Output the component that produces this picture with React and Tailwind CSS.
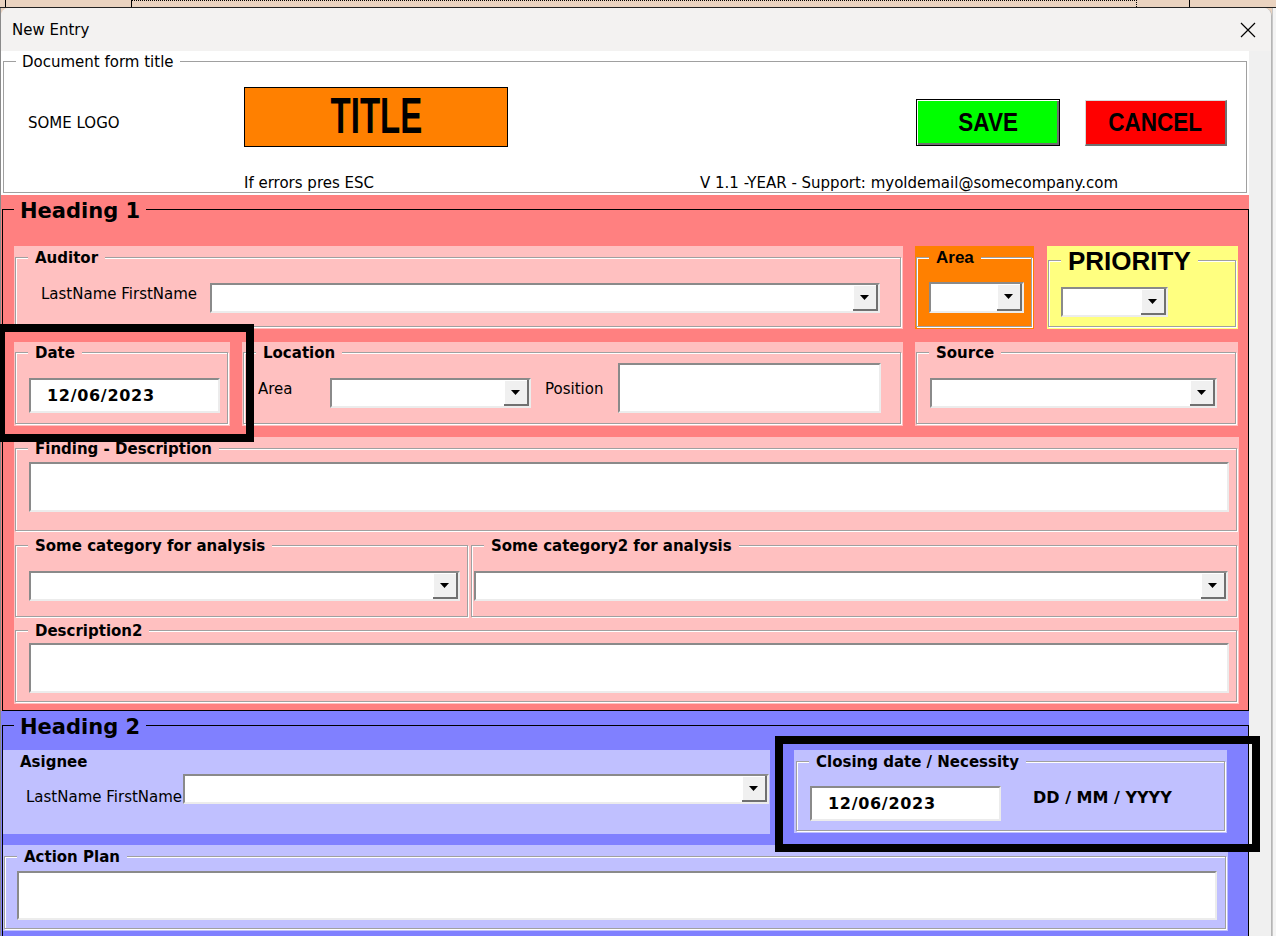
import React from "react";

const sunken =
  "bg-white border-2 border-t-[#8a8a8a] border-l-[#8a8a8a] border-r-[#ececec] border-b-[#ececec]";
const etched = "border border-[#a0a0a0] shadow-[inset_1px_1px_0_#fff,1px_1px_0_#fff]";
const arial = "font-['Liberation_Sans',Arial,sans-serif]";

function Combo({ className = "" }) {
  return (
    <div className={`flex ${sunken} ${className}`}>
      <div className="flex-1" />
      <div className="w-[25px] flex items-center justify-center bg-[#f0f0f0] border-r-2 border-b-2 border-r-[#707070] border-b-[#707070] shadow-[inset_1px_1px_0_#fff]">
        <svg width="9" height="5" viewBox="0 0 9 5">
          <path d="M0 0H9L4.5 5Z" fill="#000" />
        </svg>
      </div>
    </div>
  );
}

function DateBox({ className = "" }) {
  return (
    <div className={`flex items-center pl-[16px] ${sunken} ${className}`}>
      <span className="text-[16px] font-bold tracking-[0.7px] leading-none">12/06/2023</span>
    </div>
  );
}

function Panel({
  bg,
  legend,
  className = "",
  pad = "pt-[11px] pl-px pr-[2px] pb-[2px]",
  legendClass = "text-[15px] font-bold leading-[18px]",
  children,
}) {
  return (
    <div className={`flex flex-col ${pad} ${bg} ${className}`}>
      <div className={`relative flex-1 ${etched}`}>
        {legend && (
          <span
            className={`absolute left-[12px] top-0 -translate-y-1/2 px-[7px] whitespace-nowrap ${bg} ${legendClass}`}
          >
            {legend}
          </span>
        )}
        {children}
      </div>
    </div>
  );
}

export default function App() {
  return (
    <div className="relative w-[1276px] h-[936px] overflow-hidden bg-[#ead3c0] text-black font-['DejaVu_Sans',sans-serif]">
      {/* sheet behind the dialog */}
      <div className="h-[8px] flex border-b border-[#222]">
        <div className="w-[6px] border-r border-black" />
        <div className="w-[126px] border-r border-black" />
        <div className="w-[1005px] border-r border-black border-t border-dotted" />
        <div className="w-[53px] border-r border-black" />
      </div>

      <div className="flex h-[928px]">
        <div className="w-px bg-[#8a8a8a]" />

        {/* dialog */}
        <div className="w-[1271px] flex flex-col rounded-t-[8px] overflow-hidden bg-[#f0f0f0] border-r border-[#b5b5b5]">
          <div className="h-[43px] shrink-0 bg-[#f3f2f1] flex items-center justify-between pl-[11px] pr-[15px]">
            <span className="text-[15px] leading-[18px]">New Entry</span>
            <svg width="16" height="16" viewBox="0 0 16 16">
              <path d="M1 1L15 15M15 1L1 15" stroke="#000" strokeWidth="1.2" />
            </svg>
          </div>

          <div className="flex flex-1 min-h-0">
            <div className="w-[1248px] flex flex-col">
              {/* Document header */}
              <div className="bg-white pt-[10px] px-[2px] pb-[2px]">
                <div className={`relative h-[132px] ${etched}`}>
                  <span className="absolute left-[12px] top-0 -translate-y-1/2 px-[6px] bg-white text-[15px] leading-[18px]">
                    Document form title
                  </span>
                  <div className="flex items-start pt-[25px]">
                    <div className="w-[240px] pl-[24px] pt-[27px] text-[15px] leading-[18px]">SOME LOGO</div>
                    <div className="w-[264px] h-[60px] bg-[#ff8000] border border-black flex items-center justify-center">
                      <span className={`inline-block scale-x-[0.66] mt-[-3px] font-bold text-[50px] leading-none ${arial}`}>
                        TITLE
                      </span>
                    </div>
                    <div
                      className={`ml-[408px] mt-[12px] w-[144px] h-[47px] bg-[#00ff00] border border-black shadow-[inset_1px_1px_0_#fff,inset_-2px_-2px_0_#6e6e6e] flex items-center justify-center`}
                    >
                      <span className={`inline-block scale-x-[0.9] font-bold text-[25px] leading-none ${arial}`}>SAVE</span>
                    </div>
                    <div
                      className={`ml-[25px] mt-[13px] w-[142px] h-[46px] bg-[#ff0000] border-t border-l border-r-2 border-b-2 border-t-[#d8d8d8] border-l-[#d8d8d8] border-r-[#707070] border-b-[#707070] flex items-center justify-center`}
                    >
                      <span className={`inline-block scale-x-[0.9] font-bold text-[25px] leading-none ${arial}`}>CANCEL</span>
                    </div>
                  </div>
                  <div className="flex mt-[27px] pl-[240px] text-[15px] leading-[18px]">
                    <span className="w-[456px]">If errors pres ESC</span>
                    <span>V 1.1 -YEAR - Support: myoldemail@somecompany.com</span>
                  </div>
                </div>
              </div>

              {/* Heading 1 */}
              <div className="bg-[#ff8080] pt-[14px] pl-px">
                <div className="relative border border-black pt-[36px] pl-[11px] pr-[9px] pb-[6px]">
                  <span className="absolute left-[11px] top-[1px] -translate-y-1/2 px-[6px] bg-[#ff8080] text-[21px] font-bold leading-[24px]">
                    Heading 1
                  </span>

                  <div className="flex h-[83px]">
                    <Panel bg="bg-[#ffc0c0]" legend="Auditor" className="w-[889px]">
                      <div className="flex items-start pl-[25px] pt-[25px]">
                        <span className="w-[169px] mt-[2px] text-[15px] leading-[18px]">LastName FirstName</span>
                        <Combo className="w-[670px] h-[30px]" />
                      </div>
                    </Panel>
                    <Panel
                      bg="bg-[#ff8000]"
                      legend="Area"
                      className="w-[119px] ml-[12px]"
                      legendClass={`text-[17px] font-bold leading-[20px] ${arial}`}
                    >
                      <div className="pl-[12px] pt-[24px]">
                        <Combo className="w-[95px] h-[31px]" />
                      </div>
                    </Panel>
                    <Panel
                      bg="bg-[#ffff80]"
                      legend="PRIORITY"
                      className="w-[191px] ml-[13px]"
                      pad="pt-[14px] pl-px pr-[2px] pb-[2px]"
                      legendClass={`text-[26px] font-bold leading-[28px] ${arial}`}
                    >
                      <div className="pl-[12px] pt-[26px]">
                        <Combo className="w-[107px] h-[30px]" />
                      </div>
                    </Panel>
                  </div>

                  <div className="flex h-[84px] mt-[13px]">
                    <Panel bg="bg-[#ffc0c0]" legend="Date" className="w-[216px]" pad="pt-[10px] pl-px pr-[2px] pb-[2px]">
                      <div className="pl-[13px] pt-[25px]">
                        <DateBox className="w-[191px] h-[35px]" />
                      </div>
                    </Panel>
                    <Panel bg="bg-[#ffc0c0]" legend="Location" className="w-[661px] ml-[12px]" pad="pt-[10px] pl-px pr-[2px] pb-[2px]">
                      <div className="flex items-start pl-[14px] text-[15px] leading-[18px]">
                        <span className="w-[72px] mt-[27px]">Area</span>
                        <Combo className="w-[201px] h-[30px] mt-[25px]" />
                        <span className="w-[73px] ml-[14px] mt-[27px]">Position</span>
                        <div className={`w-[263px] h-[50px] mt-[10px] ${sunken}`} />
                      </div>
                    </Panel>
                    <Panel bg="bg-[#ffc0c0]" legend="Source" className="w-[323px] ml-[12px]" pad="pt-[10px] pl-px pr-[2px] pb-[2px]">
                      <div className="pl-[13px] pt-[25px]">
                        <Combo className="w-[287px] h-[30px]" />
                      </div>
                    </Panel>
                  </div>

                  <Panel bg="bg-[#ffc0c0]" legend="Finding - Description" className="w-[1225px] h-[96px] mt-[11px]">
                    <div className="pl-[13px] pt-[13px]">
                      <div className={`w-[1200px] h-[50px] ${sunken}`} />
                    </div>
                  </Panel>

                  <div className="flex h-[86px]">
                    <Panel bg="bg-[#ffc0c0]" legend="Some category for analysis" className="w-[456px]" pad="pt-[12px] pl-px pr-[2px] pb-[2px]">
                      <div className="pl-[13px] pt-[25px]">
                        <Combo className="w-[431px] h-[30px]" />
                      </div>
                    </Panel>
                    <Panel bg="bg-[#ffc0c0]" legend="Some category2 for analysis" className="w-[769px]" pad="pt-[12px] pl-px pr-[2px] pb-[2px]">
                      <div className="pl-[2px] pt-[25px]">
                        <Combo className="w-[754px] h-[30px]" />
                      </div>
                    </Panel>
                  </div>

                  <Panel bg="bg-[#ffc0c0]" legend="Description2" className="w-[1225px] h-[85px]">
                    <div className="pl-[13px] pt-[12px]">
                      <div className={`w-[1200px] h-[50px] ${sunken}`} />
                    </div>
                  </Panel>
                </div>
              </div>

              {/* Heading 2 */}
              <div className="bg-[#8080ff] pt-[14px] pl-px flex-1">
                <div className="relative border border-black pt-[24px] pb-[5px]">
                  <span className="absolute left-[11px] top-[1px] -translate-y-1/2 px-[6px] bg-[#8080ff] text-[21px] font-bold leading-[24px]">
                    Heading 2
                  </span>

                  <div className="flex h-[84px]">
                    <div className="w-[767px] h-[84px] bg-[#c0c0ff] pl-[17px] pt-[3px]">
                      <div className="text-[15px] font-bold leading-[18px]">Asignee</div>
                      <div className="flex items-start mt-[3px] pl-[6px]">
                        <span className="w-[157px] mt-[14px] text-[15px] leading-[18px] whitespace-nowrap">LastName FirstName</span>
                        <Combo className="w-[586px] h-[30px]" />
                      </div>
                    </div>
                    <Panel
                      bg="bg-[#c0c0ff]"
                      legend="Closing date / Necessity"
                      className="w-[433px] h-[83px] ml-[24px]"
                      pad="pt-[11px] pl-[2px] pr-[2px] pb-[2px]"
                    >
                      <div className="flex items-start pl-[13px] pt-[24px]">
                        <DateBox className="w-[191px] h-[35px]" />
                        <span className="ml-[32px] mt-[3px] text-[16px] font-bold leading-[18px]">DD / MM / YYYY</span>
                      </div>
                    </Panel>
                  </div>

                  <Panel bg="bg-[#c0c0ff]" legend="Action Plan" className="w-[1225px] h-[86px] mt-[11px]">
                    <div className="pl-[12px] pt-[14px]">
                      <div className={`w-[1200px] h-[49px] ${sunken}`} />
                    </div>
                  </Panel>
                </div>
              </div>
            </div>
            <div className="flex-1 bg-[#f0f0f0]" />
          </div>
        </div>

        <div className="flex-1 bg-[#f4f4f4] border-l border-[#c8c8c8]" />
      </div>

      {/* highlight boxes drawn over the form */}
      <div className="absolute left-[-3px] top-[324px] w-[257px] h-[118px] border-[8px] border-black" />
      <div className="absolute left-[775px] top-[736px] w-[485px] h-[116px] border-[8px] border-black" />
    </div>
  );
}
